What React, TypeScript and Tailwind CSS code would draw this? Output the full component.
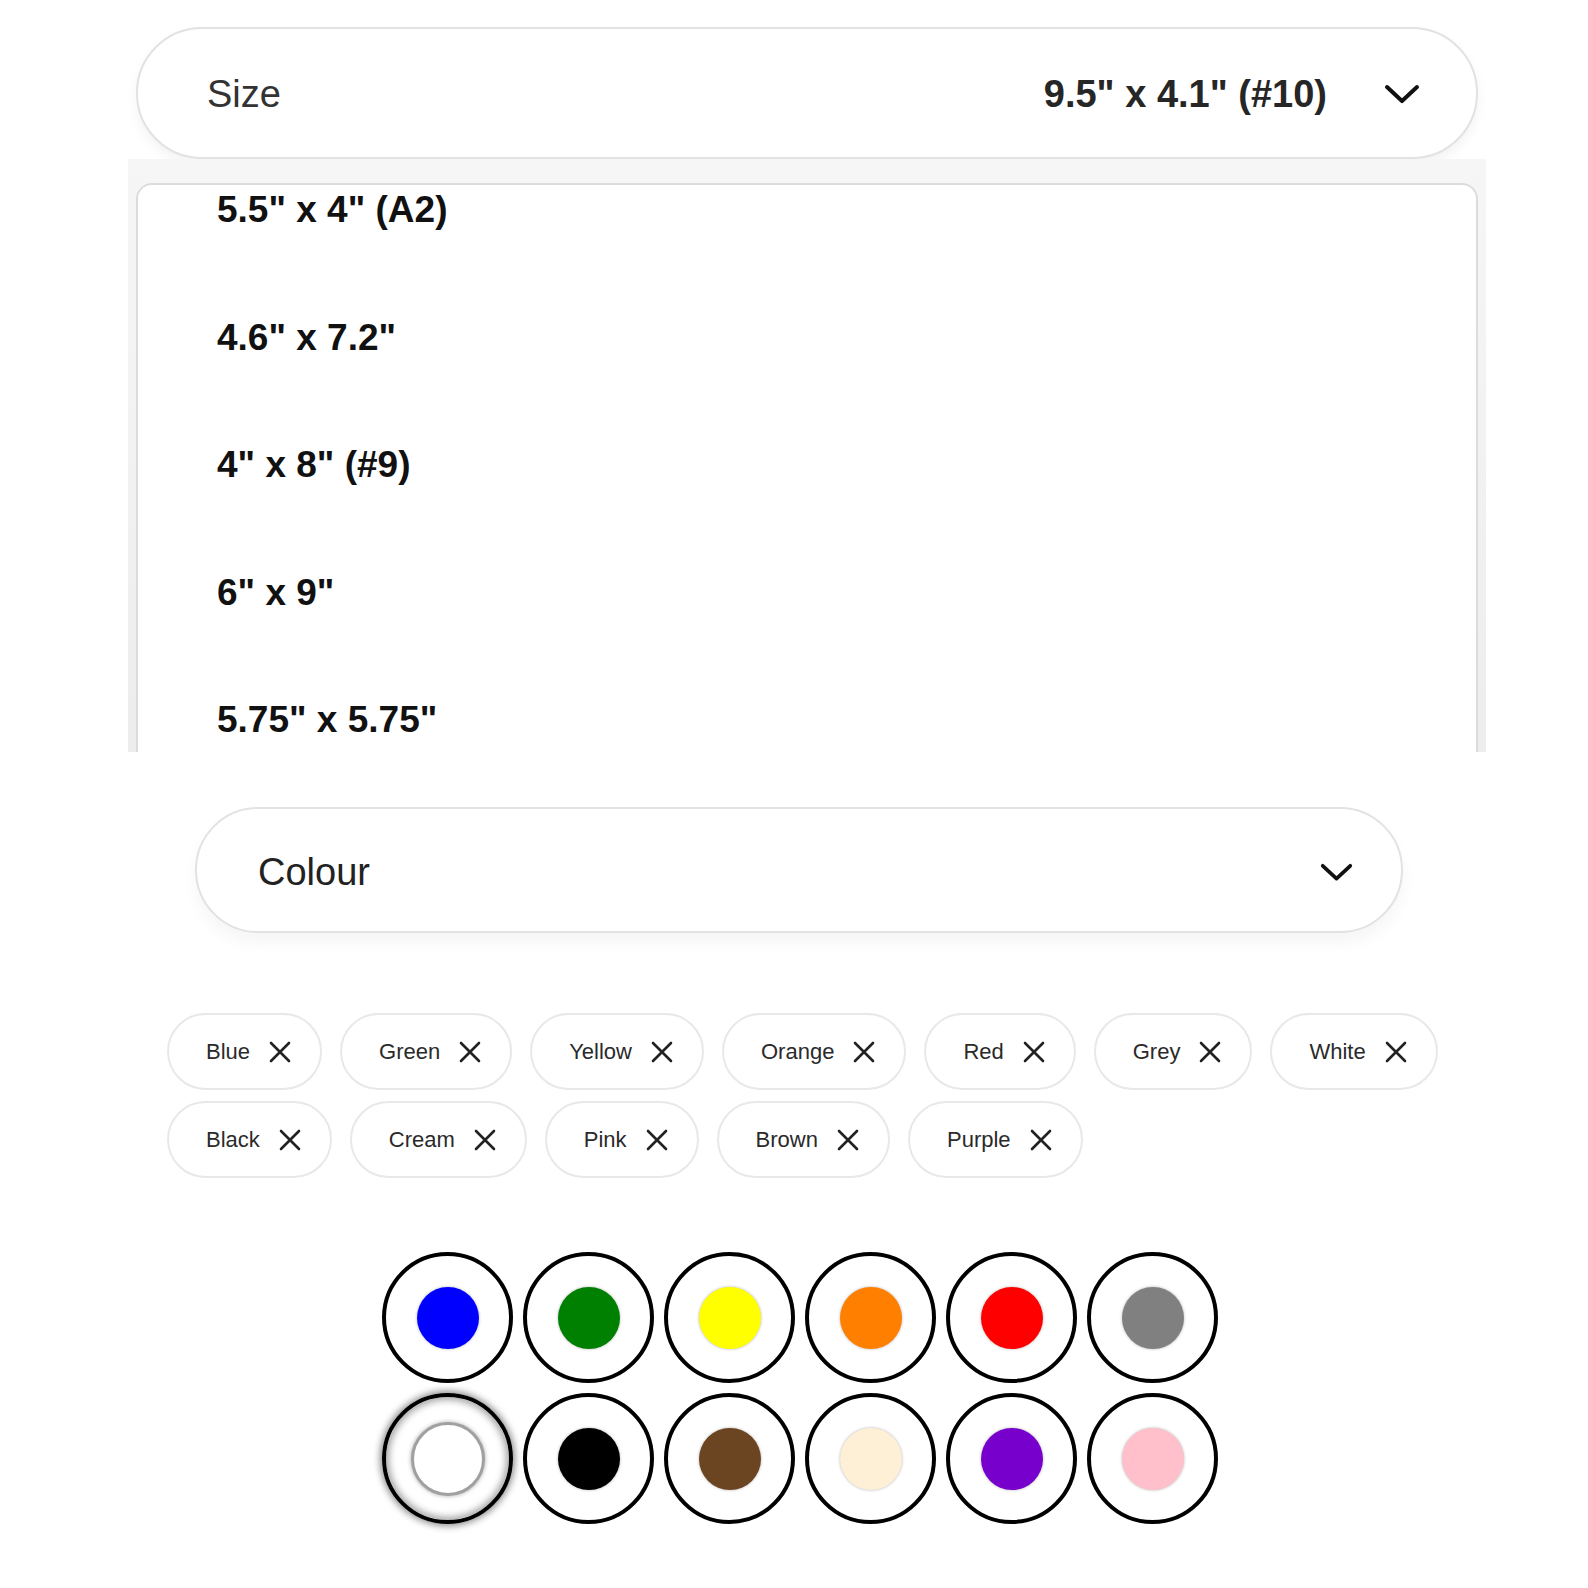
import React from "react";

const sizes = ['5.5" x 4" (A2)', '4.6" x 7.2"', '4" x 8" (#9)', '6" x 9"', '5.75" x 5.75"'];

const chips = ["Blue", "Green", "Yellow", "Orange", "Red", "Grey", "White", "Black", "Cream", "Pink", "Brown", "Purple"];

const swatches = [
  { name: "Blue", dot: "bg-[#0000ff]" },
  { name: "Green", dot: "bg-[#008000]" },
  { name: "Yellow", dot: "bg-[#ffff00]" },
  { name: "Orange", dot: "bg-[#ff7f00]" },
  { name: "Red", dot: "bg-[#ff0000]" },
  { name: "Grey", dot: "bg-[#808080]" },
  { name: "White", dot: "bg-white", selected: true },
  { name: "Black", dot: "bg-black" },
  { name: "Brown", dot: "bg-[#6b4422]" },
  { name: "Cream", dot: "bg-[#fdf0d6]" },
  { name: "Purple", dot: "bg-[#7800cc]" },
  { name: "Pink", dot: "bg-[#ffc0cb]" }
];

const Chevron: React.FC<{ w?: number }> = ({ w = 36 }) => (
  <svg width={w} height={w * 0.56} viewBox="0 0 36 20" fill="none">
    <path d="M3 3 L18 17 L33 3" stroke="#111" strokeWidth="4" strokeLinecap="round" strokeLinejoin="round" />
  </svg>
);

const Cross: React.FC = () => (
  <svg width="22" height="22" viewBox="0 0 22 22" fill="none">
    <path d="M2 2 L20 20 M20 2 L2 20" stroke="#222" strokeWidth="2.6" strokeLinecap="round" />
  </svg>
);

export default function App() {
  return (
    <div className="min-h-[1588px] w-full bg-white pt-[27px] font-['Liberation_Sans',Arial,sans-serif]">
      {/* size select, open */}
      <div className="ml-[128px] w-[1358px]">
        <div className="px-2">
          <div className="flex h-[132px] items-center justify-between rounded-full border-2 border-[#e2e2e2] bg-white pl-[69px] pr-[56px] pt-[2px] shadow-[0_6px_12px_rgba(0,0,0,0.05)]">
            <span className="text-[38px] text-[#333]">Size</span>
            <div className="flex items-center gap-[57px]">
              <span className="text-[38px] font-bold text-[#262626]">9.5" x 4.1" (#10)</span>
              <Chevron />
            </div>
          </div>
        </div>
        <div className="bg-gradient-to-b from-[#f6f6f6] to-[#ededed] px-2 pt-[24px]">
          <div className="h-[569px] overflow-hidden rounded-t-[16px] border-2 border-b-0 border-[#dcdcdc] bg-white">
            <ul className="-mt-[39px] pl-[79px]">
              {sizes.map((s) => (
                <li key={s} className="flex h-[127.6px] items-center text-[37px] font-bold text-[#111]">
                  {s}
                </li>
              ))}
            </ul>
          </div>
        </div>
      </div>

      {/* colour select */}
      <div className="ml-[195px] mt-[55px] flex h-[126px] w-[1208px] items-center justify-between rounded-full border-2 border-[#e2e2e2] bg-white pl-[61px] pr-[48px] pt-[5px] shadow-[0_10px_16px_rgba(0,0,0,0.04)]">
        <span className="text-[38px] text-[#222]">Colour</span>
        <Chevron w={33} />
      </div>

      {/* selected chips */}
      <div className="ml-[167px] mt-[80px] flex w-[1290px] flex-wrap gap-x-[18px] gap-y-[11px]">
        {chips.map((c) => (
          <div
            key={c}
            className="flex h-[77px] items-center gap-[19px] rounded-full border-2 border-[#e8e8e8] bg-white pl-[37px] pr-[29px] text-[22px] text-[#2a2a2a]"
          >
            <span>{c}</span>
            <Cross />
          </div>
        ))}
      </div>

      {/* swatches */}
      <div className="ml-[382px] mt-[74px] grid w-[836px] grid-cols-6 gap-[10px]">
        {swatches.map((s) =>
          s.selected ? (
            <div
              key={s.name}
              className="flex h-[131px] w-[131px] items-center justify-center rounded-full border-4 border-black shadow-[0_0_7px_2px_rgba(0,0,0,0.45),inset_0_0_7px_3px_rgba(0,0,0,0.35)]"
            >
              <div className="h-[74px] w-[74px] rounded-full border-[3px] border-[#a0a0a0] bg-white shadow-[0_0_4px_rgba(0,0,0,0.35)]" />
            </div>
          ) : (
            <div key={s.name} className="flex h-[131px] w-[131px] items-center justify-center rounded-full border-4 border-black bg-white">
              <div className={`h-[62px] w-[62px] rounded-full ${s.dot} shadow-[0_0_3px_rgba(0,0,0,0.3)]`} />
            </div>
          )
        )}
      </div>
    </div>
  );
}
